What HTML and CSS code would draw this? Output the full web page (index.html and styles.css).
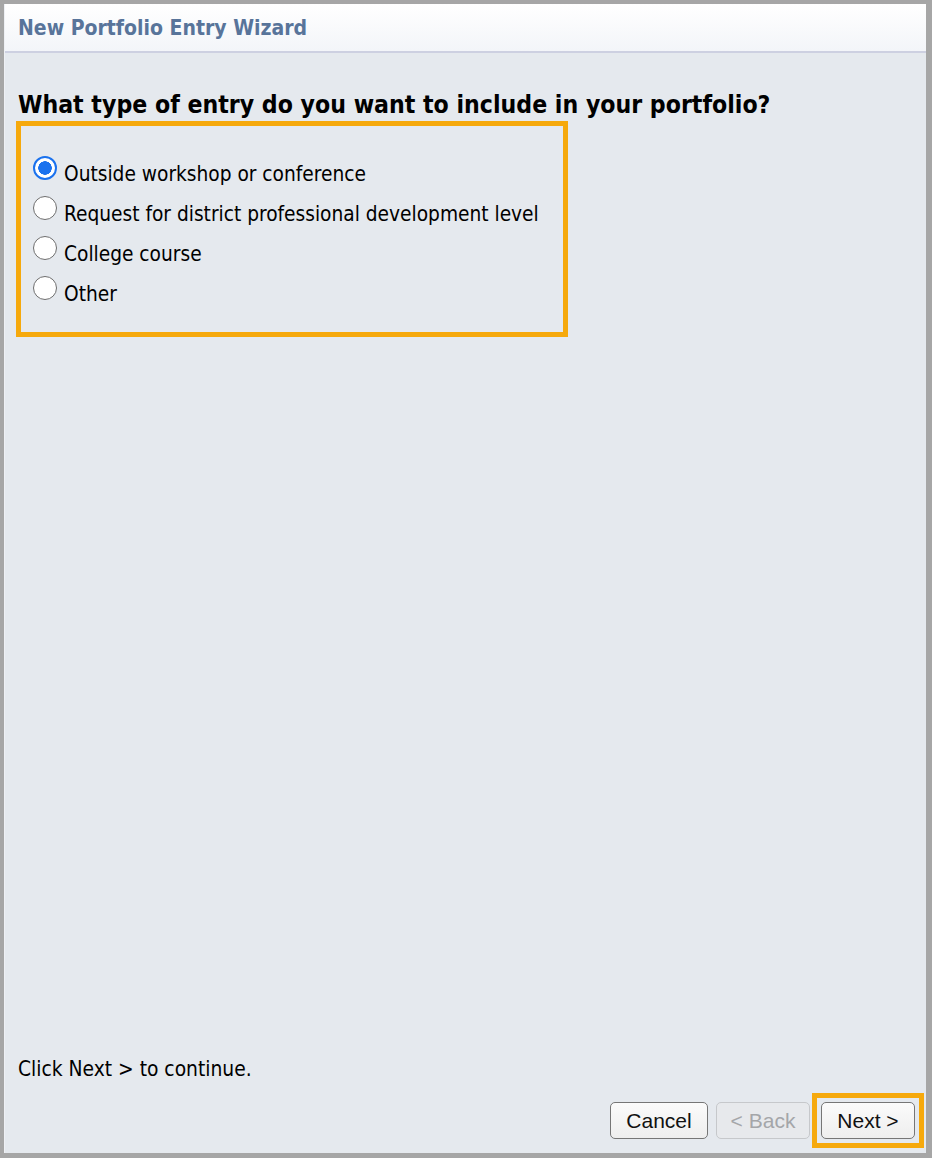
FILE: index.html
```html
<!DOCTYPE html>
<html lang="en">
<head>
    <meta charset="UTF-8">
    <meta name="viewport" content="width=device-width, initial-scale=1.0">
    <title>New Portfolio Entry Wizard</title>
    <link rel="stylesheet" href="styles.css">
</head>
<body>
    <div class="wizard">
        <div class="wizard-header">
            <h1>New Portfolio Entry Wizard</h1>
        </div>

        <div class="wizard-body">
            <h2>What type of entry do you want to include in your portfolio?</h2>
            <div class="options">
                <label class="option">
                    <input type="radio" name="entryType" value="workshop" checked>
                    <span>Outside workshop or conference</span>
                </label>
                <label class="option">
                    <input type="radio" name="entryType" value="district">
                    <span>Request for district professional development level</span>
                </label>
                <label class="option">
                    <input type="radio" name="entryType" value="college">
                    <span>College course</span>
                </label>
                <label class="option">
                    <input type="radio" name="entryType" value="other">
                    <span>Other</span>
                </label>
            </div>
        </div>

        <div class="wizard-footer">
            <p class="hint">Click Next &gt; to continue.</p>
            <div class="buttons">
                <button type="button">Cancel</button>
                <button type="button" disabled>&lt; Back</button>
                <div class="highlight">
                    <button type="button">Next &gt;</button>
                </div>
            </div>
        </div>
    </div>
</body>
</html>
```

FILE: styles.css
```css
html, body {
    height: 100%;
}
body {
    margin: 0;
    padding: 4px 6px 5px 4px;
    box-sizing: border-box;
    background: #a6a6a6;
    font-family: "DejaVu Sans Condensed", "DejaVu Sans", sans-serif;
    color: #000;
}
.wizard {
    height: 100%;
    display: flex;
    flex-direction: column;
    background: #e5e9ee;
    border-left: 1px solid #eef0f4;
}
.wizard-header {
    height: 47px;
    background: linear-gradient(#ffffff, #f3f5f9);
    border-bottom: 2px solid #cdd0e1;
    padding-left: 13px;
    display: flex;
    align-items: center;
}
h1 {
    margin: 0;
    font-size: 21px;
    font-weight: bold;
    color: #58749a;
}
.wizard-body {
    flex: 1;
    padding: 0 13px;
}
h2 {
    margin: 37px 0 2px;
    font-size: 24.6px;
    font-weight: bold;
}
.options {
    width: 530px;
    margin-left: -2px;
    padding: 28px 0 18px 12px;
    border: 5px solid #f6a90c;
}
.option {
    display: flex;
    align-items: flex-start;
    height: 40px;
    font-size: 20.7px;
    line-height: 40px;
}
.option input {
    appearance: none;
    width: 24px;
    height: 24px;
    margin: 2px 7px 0 0;
    border: 1.5px solid #6e6e6e;
    border-radius: 50%;
    background: #fff;
    box-sizing: border-box;
    flex-shrink: 0;
}
.option input:checked {
    border: 2.5px solid #1b72ee;
    background: radial-gradient(circle, #1b72ee 0 6.5px, #fff 7px);
}
.wizard-footer {
    padding: 0 0 5px 13px;
}
.hint {
    margin: 0 0 12px;
    font-size: 20.8px;
}
.buttons {
    display: flex;
    justify-content: flex-end;
    align-items: center;
    padding-right: 2px;
}
button {
    width: 98px;
    height: 37px;
    margin-left: 8px;
    background: linear-gradient(#fbfbfb, #eeeeee);
    border: 1.5px solid #767676;
    border-radius: 5px;
    font-family: "Liberation Sans", Arial, sans-serif;
    font-size: 21px;
    color: #111;
}
button:disabled {
    width: 94px;
    background: #e7e9ec;
    border-color: #c6c8cb;
    color: #a4a6a9;
}
.highlight {
    margin-left: 2px;
    padding: 4px;
    border: 5px solid #f6a90c;
}
.highlight button {
    width: 94px;
    margin: 0;
}
```
